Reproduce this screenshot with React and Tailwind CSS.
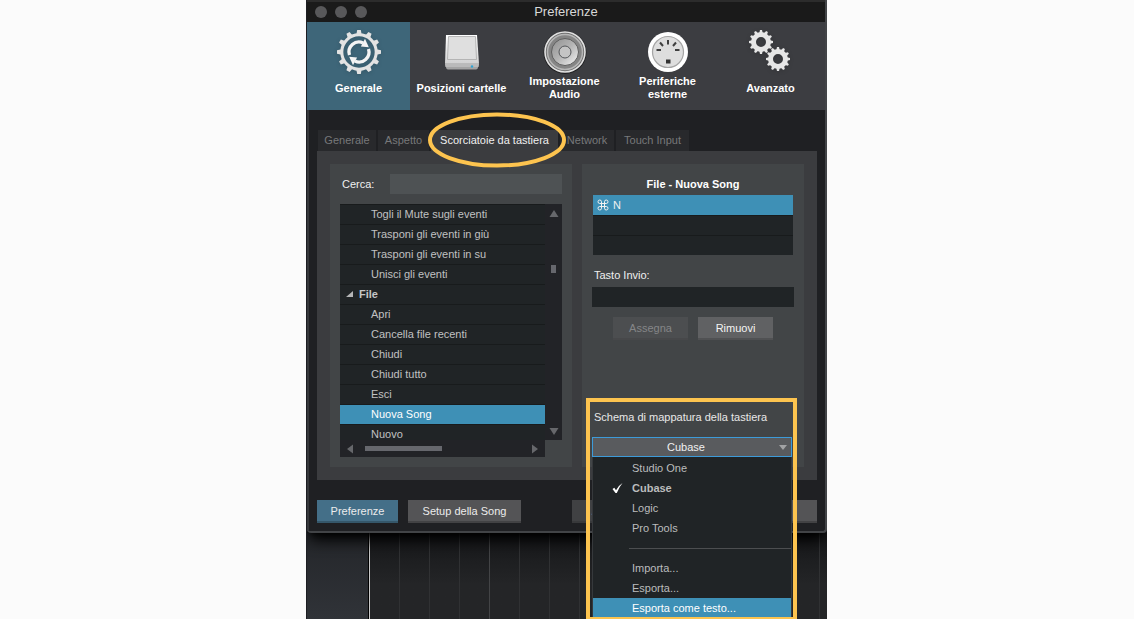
import { useState } from 'react';
import clsx from 'clsx';

const COMMANDS = [
  'Togli il Mute sugli eventi',
  'Trasponi gli eventi in giù',
  'Trasponi gli eventi in su',
  'Unisci gli eventi',
  { group: 'File' },
  'Apri',
  'Cancella file recenti',
  'Chiudi',
  'Chiudi tutto',
  'Esci',
  'Nuova Song',
  'Nuovo',
];

const SCHEMES = ['Studio One', 'Cubase', 'Logic', 'Pro Tools'];
const ACTIONS = ['Importa...', 'Esporta...', 'Esporta come testo...'];
const GRID_LINES = Array.from({ length: 16 }, (_, i) => i);

const TABS = [
  { label: 'Generale', width: 'w-[58px]' },
  { label: 'Aspetto', width: 'w-[51px]' },
  { label: 'Scorciatoie da tastiera', width: 'w-[127px]' },
  { label: 'Network', width: 'w-[54px]' },
  { label: 'Touch Input', width: 'w-[73px]' },
];

function Teeth({ cx, cy, inner, outer, width, count = 12 }) {
  return Array.from({ length: count }, (_, i) => (
    <path
      key={i}
      d={`M${cx - width / 2 - 0.9} ${cy - inner}L${cx - width / 2} ${cy - outer}H${cx + width / 2}L${cx + width / 2 + 0.9} ${cy - inner}Z`}
      transform={`rotate(${(360 / count) * i} ${cx} ${cy})`}
    />
  ));
}

function GeneralIcon() {
  return (
    <svg viewBox="0 0 44 44" className="size-11 drop-shadow-sm" aria-hidden="true">
      <g fill="#e3e3e3">
        <Teeth cx={22} cy={22} inner={17.5} outer={22} width={3.6} />
      </g>
      <circle cx="22" cy="22" r="17.200" fill="none" stroke="#e3e3e3" strokeWidth="3" />
      {['rotate(0 22 22)', 'rotate(180 22 22)'].map((transform) => (
        <g key={transform} transform={transform}>
          <path d="M12.500 25.100A10 10 0 0 1 26.100 12.900" fill="none" stroke="#f4f4f4" strokeWidth="3.300" />
          <path d="M28 8.800L31.800 17.300L23.900 16.600Z" fill="#f4f4f4" />
        </g>
      ))}
    </svg>
  );
}

function DriveIcon() {
  return (
    <svg viewBox="0 0 44 44" className="size-11" aria-hidden="true">
      <defs>
        <linearGradient id="drive" x1="0" y1="0" x2="0" y2="1">
          <stop offset="0" stopColor="#ffffff" />
          <stop offset="1" stopColor="#d2d2d2" />
        </linearGradient>
      </defs>
      <path d="M5 33L6 37.5Q6.3 39.5 8 39.5H36Q37.700 39.5 38 37.500L39 33Z" fill="#a3a3a3" />
      <path d="M6 5H37L39 33.500H5Z" fill="url(#drive)" />
      <path d="M8.500 6.500H35.500L36.500 29.500H7.500Z" fill="#dfdfdf" stroke="#aaa" strokeWidth="0.8" />
      <path d="M5 34H39L38.500 37H5.500Z" fill="#bababa" />
      <circle cx="32" cy="36.500" r="1.200" fill="#2fa3d3" />
    </svg>
  );
}

function SpeakerIcon() {
  return (
    <svg viewBox="0 0 44 44" className="size-11" aria-hidden="true">
      <defs>
        <linearGradient id="cone" x1="0" y1="0" x2="1" y2="1">
          <stop offset="0" stopColor="#8f8f8f" />
          <stop offset="0.5" stopColor="#b5b5b5" />
          <stop offset="1" stopColor="#f5f5f5" />
        </linearGradient>
      </defs>
      <circle cx="22" cy="22.500" r="21.500" fill="#202022" />
      <circle cx="22" cy="22" r="20" fill="#707070" stroke="#e2e2e2" strokeWidth="1.600" />
      <circle cx="22" cy="22" r="17.500" fill="#858585" stroke="#b6b6b6" strokeWidth="1.500" />
      <circle cx="22" cy="22" r="13.500" fill="url(#cone)" stroke="#5e5e5e" strokeWidth="1" />
      <circle cx="22" cy="22" r="6" fill="#c4c4c4" stroke="#55575a" strokeWidth="1" />
    </svg>
  );
}

function MidiIcon() {
  return (
    <svg viewBox="0 0 44 44" className="size-11" aria-hidden="true">
      <circle cx="22" cy="22" r="20" fill="#fff" />
      <circle cx="22" cy="22" r="15.500" fill="#dedede" stroke="#a5a5a5" strokeWidth="1.200" />
      <g stroke="#3f3f3f" strokeWidth="2">
        <path d="M22 10V14.500" />
        <path d="M14 12.500L17 16" />
        <path d="M30 12.500L27 16" />
        <path d="M10.500 20H15" />
        <path d="M29 20H33.500" />
      </g>
      <rect x="20" y="29.500" width="4.500" height="4" fill="#333" />
    </svg>
  );
}

function GearsIcon() {
  return (
    <svg viewBox="0 0 44 44" className="size-11 overflow-visible drop-shadow-sm" aria-hidden="true">
      {[12, 29].map((c) => (
        <g key={c} fill="#e6e6e6">
          <Teeth cx={c} cy={c} inner={8} outer={12} width={2} />
          <circle cx={c} cy={c} r="7.500" fill="none" stroke="#e6e6e6" strokeWidth="5" />
        </g>
      ))}
    </svg>
  );
}

const SECTIONS = [
  { label: 'Generale', Icon: GeneralIcon },
  { label: 'Posizioni cartelle', Icon: DriveIcon },
  { label: 'Impostazione Audio', Icon: SpeakerIcon },
  { label: 'Periferiche esterne', Icon: MidiIcon },
  { label: 'Avanzato', Icon: GearsIcon },
];

function Toolbar() {
  return (
    <nav className="grid grid-cols-5 bg-[#3c3d41] pr-[3px]">
      {SECTIONS.map(({ label, Icon }, i) => (
        <button
          key={label}
          className={clsx('flex h-[88px] flex-col items-center pt-2', i === 0 && 'bg-[#3e6679]')}
        >
          <Icon />
          <span
            className={clsx(
              'flex h-7 items-center justify-center text-[11px] leading-[13px] font-bold text-white',
              i === 2 || i === 3 ? 'w-20' : 'whitespace-nowrap'
            )}
          >
            {label}
          </span>
        </button>
      ))}
    </nav>
  );
}

function Tabs() {
  return (
    <div role="tablist" className="ml-px flex gap-0.5">
      {TABS.map(({ label, width }, i) => (
        <button
          key={label}
          role="tab"
          aria-selected={i === 2}
          className={clsx(
            'relative h-[21px] whitespace-nowrap',
            width,
            i === 2 ? 'z-10 bg-[#3b3c3f] text-[#f0f0f0]' : 'bg-[#28292c] text-[#77787a]'
          )}
        >
          {label}
          {i === 2 && (
            <svg
              viewBox="0 0 138 56"
              className="pointer-events-none absolute -top-[18px] -left-[3px] h-14 w-[138px]"
              aria-hidden="true"
            >
              <ellipse cx="69" cy="28" rx="67" ry="25.500" fill="none" stroke="#fdc44f" strokeWidth="4" />
            </svg>
          )}
        </button>
      ))}
    </div>
  );
}

function Arrow({ d, className }) {
  return (
    <svg viewBox="0 0 10 10" className={clsx('size-2.5', className)} fill="#66676b" aria-hidden="true">
      <path d={d} />
    </svg>
  );
}

function CommandList() {
  const [selected, setSelected] = useState('Nuova Song');

  return (
    <div className="mt-2.5">
      <div className="flex h-[236px]">
        <ul className="flex-1 overflow-hidden bg-[#202426]">
          {COMMANDS.map((item) =>
            item.group ? (
              <li key={item.group} className="border-t border-[#181b1c]">
                <button className="flex h-[19px] w-full items-center gap-1.5 pl-1.5 font-bold text-[#c5c6c7]">
                  <svg viewBox="0 0 7 7" className="size-[7px]" fill="#b5b6b7" aria-hidden="true">
                    <path d="M7 0V6H0Z" />
                  </svg>
                  {item.group}
                </button>
              </li>
            ) : (
              <li key={item} className="border-t border-[#181b1c]">
                <button
                  onClick={() => setSelected(item)}
                  className={clsx(
                    'block h-[19px] w-full pl-[31px] text-left',
                    item === selected ? 'bg-[#3e90b6] text-white' : 'text-[#c0c1c2]'
                  )}
                >
                  {item}
                </button>
              </li>
            )
          )}
        </ul>
        <div className="flex w-[17px] flex-col items-center justify-between bg-[#222327] py-1">
          <Arrow d="M0.500 9H9.500L5 2Z" />
          <div className="mb-[106px] h-2 w-[5px] bg-[#66676d]" />
          <Arrow d="M0.500 2H9.500L5 9Z" />
        </div>
      </div>
      <div className="mr-[17px] flex h-[17px] items-center bg-[#222327] px-[5px]">
        <Arrow d="M8 0.500V9.500L2 5Z" />
        <div className="ml-2.5 h-[5px] w-[77px] bg-[#66676d]" />
        <Arrow d="M2 0.500V9.500L8 5Z" className="ml-auto" />
      </div>
    </div>
  );
}

function MappingScheme() {
  const [scheme, setScheme] = useState('Cubase');

  return (
    <div className="relative z-20 mt-auto mr-0.5">
      <label htmlFor="scheme" className="mb-2.5 block h-5 pl-0.5 leading-5 whitespace-nowrap text-[#e8e8e8]">
        Schema di mappatura della tastiera
      </label>
      <div className="relative">
        <select
          id="scheme"
          value={scheme}
          onChange={(e) => setScheme(e.target.value)}
          className="block h-5 w-full appearance-none border border-solid border-[#3d9bd9] bg-[#595b5e] pr-3 text-center text-[#f0f0f0] outline-none"
        >
          {SCHEMES.map((name) => (
            <option key={name}>{name}</option>
          ))}
        </select>
        <svg
          viewBox="0 0 8 5"
          className="pointer-events-none absolute top-2 right-[5px] h-[5px] w-2"
          fill="#a2a3a5"
          aria-hidden="true"
        >
          <path d="M0 0H8L4 5Z" />
        </svg>
        <ul className="absolute inset-x-0 top-full border-x border-[#36393c] bg-[#202426] pt-px">
          {SCHEMES.map((name) => (
            <li key={name}>
              <button
                onClick={() => setScheme(name)}
                className={clsx(
                  'flex h-5 w-full items-center pl-[19px] text-[#bbbcbd]',
                  name === scheme && 'font-bold'
                )}
              >
                <span className="w-5">
                  {name === scheme && (
                    <svg viewBox="0 0 11 10" className="h-2.5 w-[11px]" fill="#fff" aria-hidden="true">
                      <path d="M0.500 6L2.300 4.800L4 7.200Q6.500 2.500 10.500 0Q7.500 3.500 4.800 10H3.500Z" />
                    </svg>
                  )}
                </span>
                {name}
              </button>
            </li>
          ))}
          <li role="separator" className="flex h-5 items-center pl-9">
            <span className="h-px w-full bg-[#4c4e50]" />
          </li>
          {ACTIONS.map((name, i) => (
            <li key={name}>
              <button
                className={clsx(
                  'block h-5 w-full pl-[39px] text-left',
                  i === 2 ? 'bg-[#3e90b6] text-white' : 'text-[#bbbcbd]'
                )}
              >
                {name}
              </button>
            </li>
          ))}
        </ul>
      </div>
      <div className="pointer-events-none absolute -top-[9px] -right-[5px] -left-1.5 h-[223px] border-4 border-[#fdc44f]" />
    </div>
  );
}

function Shortcuts() {
  return (
    <div className="flex gap-2.5 bg-[#3b3c3f] p-[13px]">
      <section className="min-w-0 flex-[222] bg-[#424547] p-2.5">
        <div className="flex items-center">
          <label htmlFor="search" className="w-[50px] pl-0.5 text-[#f0f0f0]">
            Cerca:
          </label>
          <input id="search" className="h-5 min-w-0 flex-1 bg-[#4e5254] px-1.5 text-white outline-none" />
        </div>
        <CommandList />
      </section>

      <section className="flex min-w-0 flex-[202] flex-col bg-[#424547] p-2.5">
        <h2 className="h-5 text-center leading-5 font-bold text-white">File - Nuova Song</h2>
        <ul className="mx-px mt-px bg-[#202426]">
          <li className="flex h-5 items-center gap-1 bg-[#3e90b6] pl-1 text-[#f0f0f0]">
            <svg
              viewBox="0 0 24 24"
              className="size-3"
              fill="none"
              stroke="currentColor"
              strokeWidth="2"
              aria-hidden="true"
            >
              <path d="M15 5.500v13a3.500 3.500 0 1 0 3.500-3.500h-13a3.500 3.500 0 1 0 3.500 3.500v-13a3.500 3.500 0 1 0-3.500 3.500h13a3.500 3.500 0 1 0-3.500-3.500" />
            </svg>
            N
          </li>
          <li className="h-5 border-t border-[#181b1c]" />
          <li className="h-5 border-t border-[#181b1c]" />
        </ul>
        <label htmlFor="key" className="mt-2.5 h-5 pl-0.5 leading-5 text-[#f0f0f0]">
          Tasto Invio:
        </label>
        <input id="key" className="mt-0.5 h-5 w-full bg-[#202426] px-1.5 text-white outline-none" />
        <div className="mt-2.5 flex justify-center gap-2.5">
          <button
            disabled
            className="h-[23px] w-[75px] border-b-2 border-[#47484a] bg-[#4c4e50] pt-0.5 text-[#858688]"
          >
            Assegna
          </button>
          <button className="h-[23px] w-[75px] border-b-2 border-[#505153] bg-[#606163] pt-0.5 text-[#f4f4f4]">
            Rimuovi
          </button>
        </div>
        <MappingScheme />
      </section>
    </div>
  );
}

function Footer() {
  return (
    <footer className="mt-5 flex gap-2.5">
      <button className="h-[23px] w-[81px] border-b-2 border-[#35576a] bg-[#446f88] pt-0.5 text-[#ececec]">
        Preferenze
      </button>
      <button className="h-[23px] w-[113px] border-b-2 border-[#424244] bg-[#545456] pt-0.5 text-[#ececec]">
        Setup della Song
      </button>
      <button
        disabled
        className="ml-auto h-[23px] w-[75px] border-b-2 border-[#38393b] bg-[#404143] pt-0.5 text-[#77787a]"
      >
        Applica
      </button>
      <button className="h-[23px] w-[75px] border-b-2 border-[#424244] bg-[#545456] pt-0.5 text-[#ececec]">
        Annulla
      </button>
      <button className="h-[23px] w-[75px] border-b-2 border-[#424244] bg-[#545456] pt-0.5 text-[#ececec]">
        OK
      </button>
    </footer>
  );
}

export default function App() {
  return (
    <div className="h-screen overflow-hidden bg-[#fbfbfb] font-['Liberation_Sans',Arial,sans-serif] text-[11px]">
      <div className="mx-auto flex h-full w-full max-w-[520px] flex-col overflow-hidden bg-[#1c1d1f] shadow-[-1px_0_0_#1c1d22]">
        <main className="relative z-10 rounded-b-sm border-r-2 border-b-2 border-[#424447] bg-[#1f2023] shadow-lg shadow-black">
          <header className="relative flex h-[22px] items-center justify-center border-t-2 border-[#2c2c2c] bg-[#1a1a1a]">
            <div className="absolute left-2 flex gap-2">
              <span className="size-3 rounded-full bg-[#58585a]" />
              <span className="size-3 rounded-full bg-[#58585a]" />
              <span className="size-3 rounded-full bg-[#58585a]" />
            </div>
            <h1 className="text-[13px] text-[#d8d8d8]">Preferenze</h1>
          </header>
          <Toolbar />
          <div className="border-l-2 border-[#36383b] px-2 pt-5 pb-2">
            <Tabs />
            <Shortcuts />
            <Footer />
          </div>
        </main>

        <div className="flex flex-1 overflow-hidden bg-linear-to-b from-[#161719] to-[#242527] to-60%">
          <div className="w-[62px] shrink-0 border-r border-black bg-linear-to-b from-[#24262a] to-[#303338]" />
          {GRID_LINES.map((i) => (
            <div
              key={i}
              className={clsx(
                'w-[30px] shrink-0 border-l',
                i === 0 ? 'border-[#c8c8c8]' : i % 4 === 0 ? 'border-[#434446]' : 'border-[#303133]'
              )}
            />
          ))}
        </div>
      </div>
    </div>
  );
}
